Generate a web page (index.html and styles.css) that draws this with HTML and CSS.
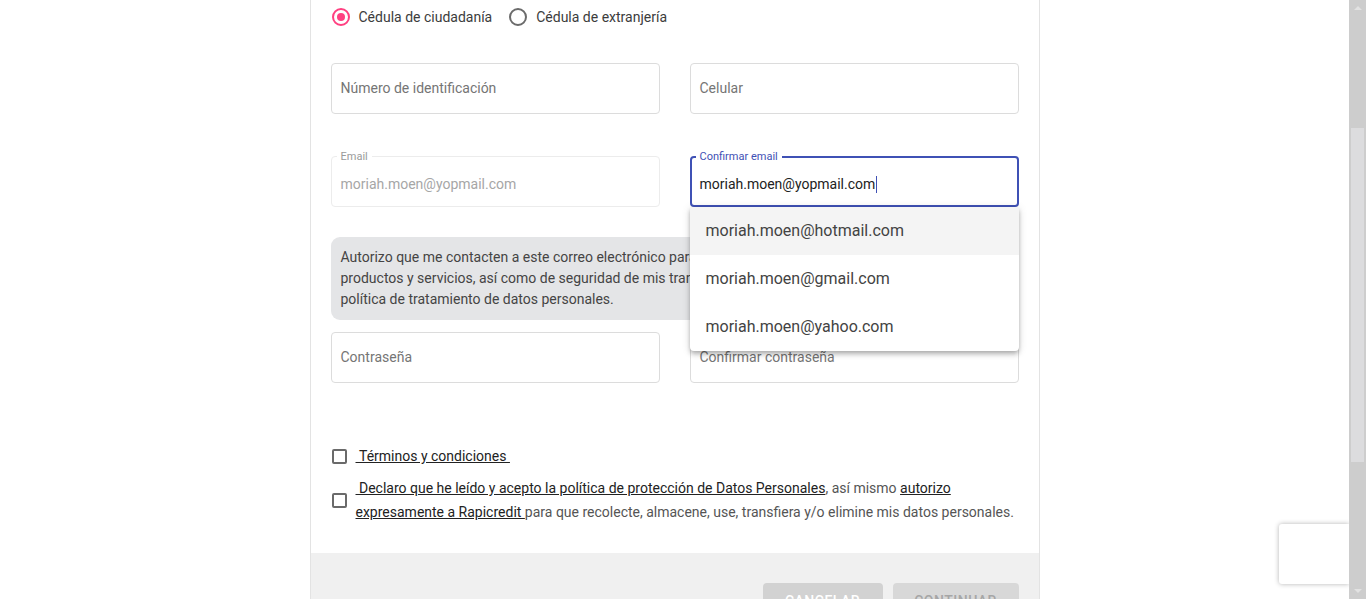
FILE: index.html
```html
<!DOCTYPE html>
<html lang="es">
<head>
<meta charset="utf-8">
<title>Registro</title>
<link rel="stylesheet" href="styles.css">
</head>
<body>
<div class="viewport">
  <main class="main">
    <section class="card">
      <div class="card-body">
        <div class="radio-row">
          <label class="radio checked"><span class="radio-circle"><span class="radio-dot"></span></span><span class="radio-label">Cédula de ciudadanía</span></label>
          <label class="radio"><span class="radio-circle"></span><span class="radio-label">Cédula de extranjería</span></label>
        </div>

        <div class="field-row row-first">
          <div class="field"><span class="placeholder">Número de identificación</span></div>
          <div class="field"><span class="placeholder">Celular</span></div>
        </div>

        <div class="field-row row-email">
          <div class="field field-disabled">
            <span class="float-label">Email</span>
            <span class="value">moriah.moen@yopmail.com</span>
          </div>
          <div class="field-wrap">
            <div class="field field-focused">
              <span class="float-label">Confirmar email</span>
              <span class="value">moriah.moen@yopmail.com<span class="caret"></span></span>
            </div>
            <ul class="dropdown">
              <li class="dropdown-item active">moriah.moen@hotmail.com</li>
              <li class="dropdown-item">moriah.moen@gmail.com</li>
              <li class="dropdown-item">moriah.moen@yahoo.com</li>
            </ul>
          </div>
        </div>

        <div class="notice">Autorizo que me contacten a este correo electrónico para recibir información sobre nuevos<br>productos y servicios, así como de seguridad de mis transacciones, de acuerdo con la<br>política de tratamiento de datos personales.</div>

        <div class="field-row row-pass">
          <div class="field"><span class="placeholder">Contraseña</span></div>
          <div class="field"><span class="placeholder">Confirmar contraseña</span></div>
        </div>

        <div class="check-row check-first">
          <span class="checkbox"></span>
          <span class="check-text"><a class="link" href="#">&nbsp;Términos y condiciones&nbsp;</a></span>
        </div>
        <div class="check-row check-second">
          <span class="checkbox"></span>
          <span class="check-text"><a class="link" href="#">&nbsp;Declaro que he leído y acepto la política de protección de Datos Personales</a>, así mismo <a class="link" href="#">autorizo expresamente a Rapicredit&nbsp;</a>para que recolecte, almacene, use, transfiera y/o elimine mis datos personales.</span>
        </div>
      </div>
      <div class="card-footer">
        <button class="btn btn-cancel" type="button">Cancelar</button>
        <button class="btn btn-next" type="button">Continuar</button>
      </div>
    </section>
    <div class="recaptcha"></div>
  </main>
  <div class="scrollbar">
    <span class="arrow arrow-up"></span>
    <div class="thumb"></div>
    <span class="arrow arrow-down"></span>
  </div>
</div>
</body>
</html>
```
FILE: styles.css
```css
* { box-sizing: border-box; }
html, body { margin: 0; padding: 0; height: 100%; overflow: hidden; background: #fff; }
body { font-family: Roboto, "Liberation Sans", Arial, sans-serif; color: #444; }

.viewport { display: flex; width: 1366px; height: 599px; }
.main { position: relative; flex: 1; display: flex; justify-content: center; overflow: hidden; background: #fff; }

.card {
  width: 730px;
  background: #fff;
  border-left: 1px solid #e3e3e3;
  border-right: 1px solid #e3e3e3;
  display: flex;
  flex-direction: column;
}
.card-body { padding: 8px 20px 29px 20px; display: flex; flex-direction: column; }

/* radios */
.radio-row { display: flex; align-items: center; height: 18px; }
.radio { display: flex; align-items: center; margin-left: 1px; margin-right: 16px; cursor: pointer; }
.radio-circle {
  width: 18px; height: 18px; border-radius: 50%;
  border: 2px solid #6b6b6b;
  display: flex; align-items: center; justify-content: center;
}
.radio.checked .radio-circle { border-color: #ff4081; }
.radio-dot { width: 8px; height: 8px; border-radius: 50%; background: #ff4081; }
.radio-label { font-size: 14px; color: #3c3c3c; margin-left: 9px; line-height: 18px; }

/* fields */
.field-row { display: grid; grid-template-columns: 1fr 1fr; column-gap: 30px; }
.row-first { margin-top: 37px; }
.row-email { margin-top: 42px; }
.row-pass { margin-top: 12px; }
.field-wrap { position: relative; display: flex; min-width: 0; }
.field {
  position: relative;
  flex: 1;
  min-width: 0;
  height: 51px;
  border: 1px solid #dcdcdc;
  border-radius: 4px;
  display: flex; align-items: center;
  padding: 0 9px 1px 9px;
  background: #fff;
}
.placeholder { font-size: 14px; color: #757575; }
.value { font-size: 14px; color: #222; padding-top: 6px; display: flex; align-items: center; white-space: nowrap; }
.float-label {
  position: absolute; top: -7px; left: 5px;
  padding: 0 4px; background: #fff;
  font-size: 11px; line-height: 13px; color: #9a9a9a;
}
.field-disabled { border-color: #ececec; }
.field-disabled .value { color: #a6a6a6; }
.field-focused { border: 2px solid #3f51b5; padding: 0 8px 1px 8px; }
.field-focused .float-label { color: #3f51b5; top: -8px; left: 4px; }
.caret { display: inline-block; width: 1px; height: 17px; background: #3f51b5; margin-left: 1px; }

.dropdown {
  position: absolute; left: 0; right: 0; top: 51px;
  margin: 0; padding: 0; list-style: none;
  background: #fff;
  border-radius: 0 0 4px 4px;
  box-shadow: 0 2px 4px -1px rgba(0,0,0,.2), 0 4px 5px 0 rgba(0,0,0,.14), 0 1px 10px 0 rgba(0,0,0,.12);
  z-index: 5;
}
.dropdown-item { height: 48px; display: flex; align-items: center; padding: 0 0 2px 16px; font-size: 16px; color: #434343; }
.dropdown-item.active { background: #f4f4f4; }

/* notice */
.notice {
  margin-top: 30px;
  background: #e4e5e7;
  border-radius: 9px;
  padding: 10px 10px;
  font-size: 14px; line-height: 21px; color: #444;
  height: 83px;
}

/* checkboxes */
.check-row { display: flex; align-items: center; gap: 9px; font-size: 14px; line-height: 24px; color: #555; }
.check-first { margin-top: 61px; }
.check-second { margin-top: 8px; }
.checkbox { flex: none; width: 15px; height: 15px; border: 2px solid #6a6a6a; border-radius: 2px; margin-left: 1px; }
.link { color: #222; text-decoration: underline; }

/* footer */
.card-footer {
  flex: 1;
  background: #f0f0f0;
  display: flex; justify-content: flex-end; align-items: flex-start;
  gap: 10px;
  padding: 30px 20px 0 0;
}
.btn {
  height: 36px; border: none; border-radius: 4px;
  font-family: Roboto, "Liberation Sans", Arial, sans-serif;
  font-size: 14px; font-weight: 500; text-transform: uppercase; letter-spacing: .5px;
  padding: 0 16px;
}
.btn-cancel { width: 120px; background: #d2d2d2; color: #fff; }
.btn-next { width: 126px; background: #d8d8d8; color: #a6a6a6; }

/* recaptcha badge */
.recaptcha {
  position: absolute; right: 0; bottom: 15px;
  width: 70px; height: 60px;
  background: #fff; border-radius: 3px 0 0 3px;
  box-shadow: 0 0 5px rgba(0,0,0,.3);
}

/* scrollbar */
.scrollbar { position: relative; width: 17px; height: 599px; background: #cdcdcd; flex: none; }
.thumb { position: absolute; left: 2px; right: 2px; top: 128px; height: 334px; background: #dcdcde; }
.arrow { position: absolute; left: 5px; width: 0; height: 0; border-left: 4px solid transparent; border-right: 4px solid transparent; }
.arrow-up { top: 6px; border-bottom: 4px solid #e2e2e2; }
.arrow-down { bottom: 6px; border-top: 4px solid #e2e2e2; }
```
